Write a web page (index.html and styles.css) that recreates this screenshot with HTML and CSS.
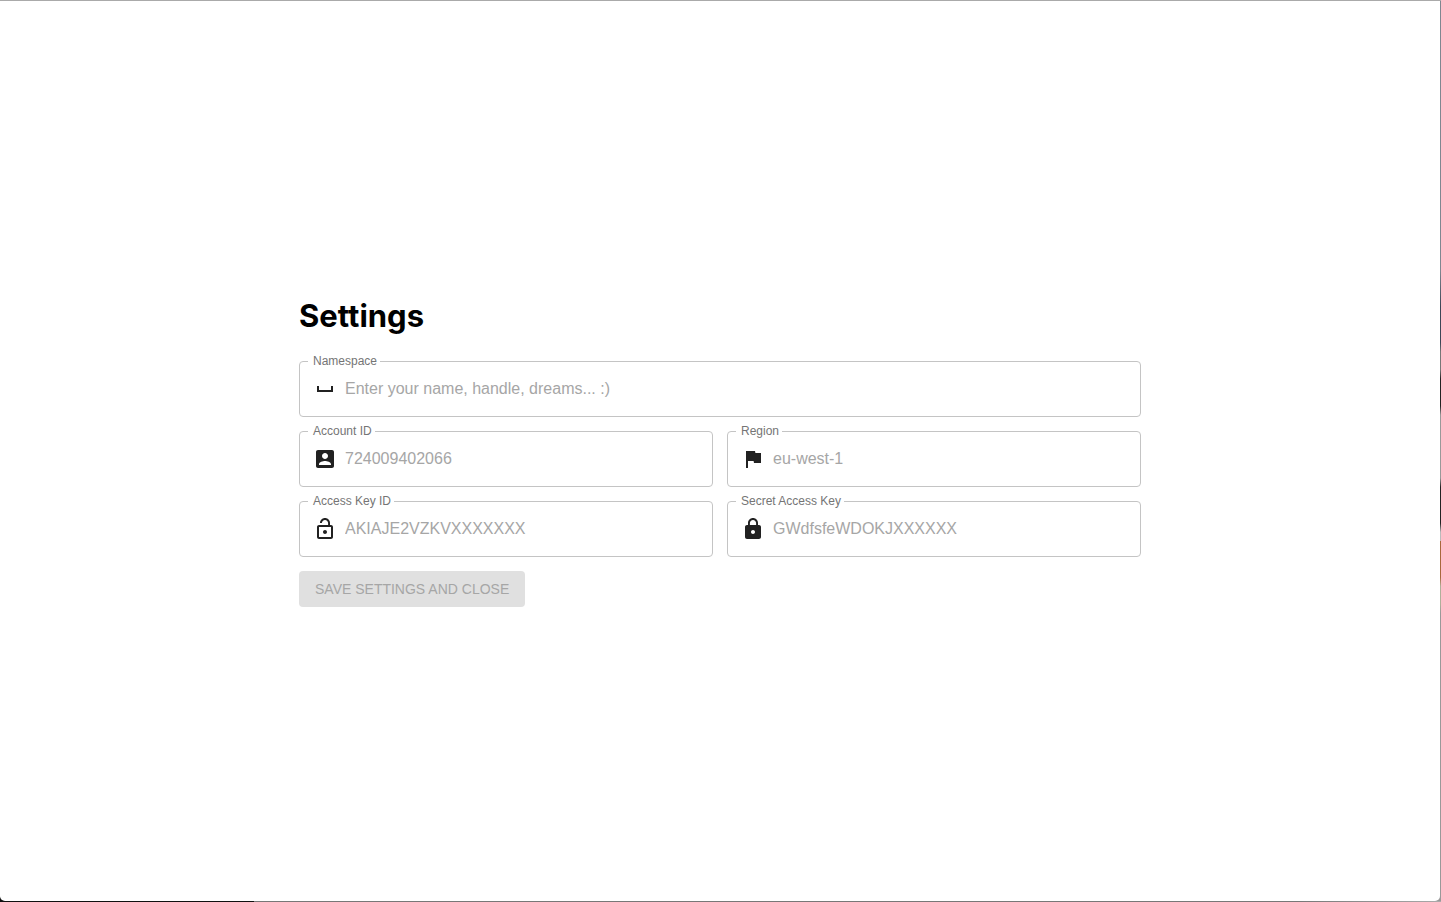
FILE: index.html
```html
<!DOCTYPE html>
<html lang="en">
<head>
<meta charset="utf-8">
<meta name="viewport" content="width=device-width, initial-scale=1">
<title>Settings</title>
<link rel="stylesheet" href="styles.css">
</head>
<body>
<main class="window">
  <form class="settings">
    <h1 class="title">Settings</h1>
    <div class="field field-wide">
      <label class="label" for="namespace">Namespace</label>
      <svg class="icon" viewBox="0 0 24 24" aria-hidden="true"><path d="M18 9v4H6V9H4v6h16V9z"/></svg>
      <input class="input" id="namespace" type="text" placeholder="Enter your name, handle, dreams... :)">
    </div>
    <div class="field">
      <label class="label" for="account">Account ID</label>
      <svg class="icon" viewBox="0 0 24 24" aria-hidden="true"><path d="M3 5v14c0 1.100.89 2 2 2h14c1.100 0 2-.9 2-2V5c0-1.100-.9-2-2-2H5c-1.110 0-2 .9-2 2zm12 4c0 1.660-1.340 3-3 3s-3-1.340-3-3 1.340-3 3-3 3 1.340 3 3zm-9 8c0-2 4-3.100 6-3.100s6 1.100 6 3.100v1H6v-1z"/></svg>
      <input class="input" id="account" type="text" placeholder="724009402066">
    </div>
    <div class="field">
      <label class="label" for="region">Region</label>
      <svg class="icon" viewBox="0 0 24 24" aria-hidden="true"><path d="M14.400 6L14 4H5v17h2v-7h5.600l.4 2h7V6z"/></svg>
      <input class="input" id="region" type="text" placeholder="eu-west-1">
    </div>
    <div class="field">
      <label class="label" for="access-key">Access Key ID</label>
      <svg class="icon" viewBox="0 0 24 24" aria-hidden="true"><path d="M12 17c1.100 0 2-.9 2-2s-.9-2-2-2-2 .9-2 2 .9 2 2 2zm6-9h-1V6c0-2.760-2.240-5-5-5S7 3.240 7 6h1.900c0-1.710 1.390-3.100 3.100-3.100s3.100 1.390 3.100 3.100v2H6c-1.100 0-2 .9-2 2v10c0 1.100.9 2 2 2h12c1.100 0 2-.9 2-2V10c0-1.100-.9-2-2-2zm0 12H6V10h12v10z"/></svg>
      <input class="input" id="access-key" type="text" placeholder="AKIAJE2VZKVXXXXXXX">
    </div>
    <div class="field">
      <label class="label" for="secret-key">Secret Access Key</label>
      <svg class="icon" viewBox="0 0 24 24" aria-hidden="true"><path d="M18 8h-1V6c0-2.760-2.240-5-5-5S7 3.240 7 6v2H6c-1.100 0-2 .9-2 2v10c0 1.100.9 2 2 2h12c1.100 0 2-.9 2-2V10c0-1.100-.9-2-2-2zm-6 9c-1.100 0-2-.9-2-2s.9-2 2-2 2 .9 2 2-.9 2-2 2zm3.100-9H8.900V6c0-1.710 1.390-3.100 3.100-3.100s3.100 1.390 3.100 3.100v2z"/></svg>
      <input class="input" id="secret-key" type="text" placeholder="GWdfsfeWDOKJXXXXXX">
    </div>
    <button class="save" type="submit" disabled>Save settings and close</button>
  </form>
</main>
</body>
</html>
```
FILE: styles.css
```css
* {
  box-sizing: border-box;
}

/* The desktop shows as a thin line around the window. */
body {
  margin: 0;
  min-height: 100vh;
  display: flex;
  padding: 1px 1px 1px 0;
  background:
    linear-gradient(#aaa, #aaa) top / 100% 1px no-repeat,
    linear-gradient(#111, #111) bottom left / 254px 5px no-repeat,
    linear-gradient(to right, #777 90%, #aaa) bottom / 100% 1px no-repeat,
    linear-gradient(#7f8791 0 30%, #3c4656 34% 38%, #777 39% 41%, #222 42% 45%, #999 46% 53%, #222 54% 58%, #bbb 59% 60%, #a8683c 60% 64%, #b0b09a 65% 67%, #999 68%);
  font-family: "Liberation Sans", Arial, sans-serif;
}

.window {
  flex: 1;
  display: flex;
  align-items: center;
  justify-content: center;
  padding: 0 16px;
  background: #fff;
  border-radius: 0 0 5px 5px;
}

.settings {
  flex: 0 1 842px;
  display: grid;
  grid-template-columns: 1fr 1fr;
  gap: 14px;
}

.title {
  grid-column: 1 / -1;
  margin: 0;
  padding: 2px 0 12px;
  font: 700 31px/38px Inter, sans-serif;
  color: #000;
}

.field {
  position: relative;
  display: flex;
  align-items: center;
  gap: 8px;
  min-width: 0;
  height: 56px;
  padding: 0 13px;
  border: 1px solid #c4c4c4;
  border-radius: 4px;
}

.field-wide {
  grid-column: 1 / -1;
}

.label {
  position: absolute;
  top: -8px;
  left: 8px;
  padding: 0 3px 0 5px;
  background: #fff;
  font-size: 12px;
  line-height: 14px;
  color: #757575;
}

.icon {
  flex: none;
  width: 24px;
  height: 24px;
  fill: #212121;
}

.input {
  flex: 1;
  min-width: 0;
  padding: 0;
  border: 0;
  outline: 0;
  background: none;
  font: 16px/20px "Liberation Sans", Arial, sans-serif;
  color: #212121;
}

.input::placeholder {
  color: #a6a6a6;
  opacity: 1;
}

.save {
  justify-self: start;
  padding: 0 16px;
  border: 0;
  border-radius: 4px;
  background: #e0e0e0;
  font: 14px/36px "Liberation Sans", Arial, sans-serif;
  text-transform: uppercase;
  color: #a6a6a6;
}
```
